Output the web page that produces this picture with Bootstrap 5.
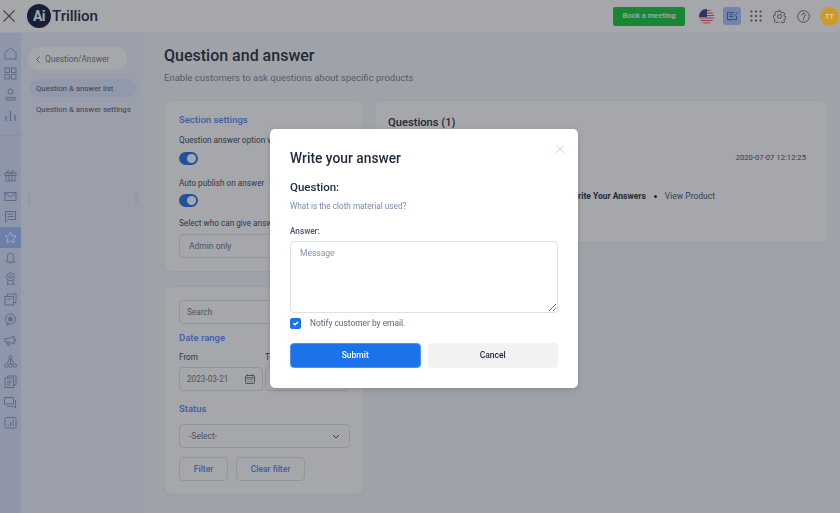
<!DOCTYPE html>
<html lang="en">
<head>
<meta charset="utf-8">
<title>Question and answer</title>
<link href="https://cdn.jsdelivr.net/npm/bootstrap@5.3.0/dist/css/bootstrap.min.css" rel="stylesheet">
<style>
html,body{height:513px;overflow:hidden}
body{font-family:Roboto,"Liberation Sans",sans-serif;background:#f5f7fb;color:#1e2a3a;font-size:9px}
.shell{width:840px;height:513px;display:flex;flex-direction:column}
.topbar{height:33px;flex:none;background:#fff;border-bottom:1px solid #eef1f8;padding:0 1px 0 3px}
.brand-x{width:12px;height:12px;margin-right:12px}
.logo-word{font-size:15.2px;font-weight:500;letter-spacing:-.1px;color:#1a2540;margin-left:1px}
.logo-ball{width:24px;height:24px;border-radius:50%;background:#0b1b3d;color:#fff;font-size:14px;font-weight:700;line-height:24px;text-align:center;letter-spacing:-.5px}
.book-btn{background:#0fc935;border:0;color:#fff;font-size:7.6px;font-weight:500;width:72px;height:19px;padding:0;border-radius:2px;margin-right:14px}
.flag{width:15px;height:15px;border-radius:50%;margin-right:9px;overflow:hidden;display:block}
.news-tile{width:18px;height:18px;background:#a9c4ff;border-radius:3px;margin-right:9px}
.top-ic{display:block;margin-right:11px}
.ic-grid{width:12px;height:12px}
.ic-round{width:13px;height:13px}
.avatar{width:19px;height:19px;border-radius:50%;background:#cc9a2a;color:#e9e4d2;font-size:7.500px;line-height:19px;text-align:center;margin-left:-1px;position:relative;z-index:1055}
.body-row{flex:1;min-height:0}
.rail{width:21px;flex:none;background:#d8e3fb;padding-top:10px}
.rail-ic{height:20.6px;display:flex;align-items:center;justify-content:center}
.rail-ic svg{width:13px;height:13px;display:block}
.rail-sep{height:1px;background:#cfd6e6;margin:10px 0 29px}
.rail-on{background:#9dbcff}
.subnav{width:122px;flex:none;background:#ebf1ff;padding:14px 6px 0 7px;position:relative}
.back-pill{height:23px;width:99px;background:#fff;border-radius:12px;font-size:8.300px;color:#66738a;padding:1px 0 0 8px;gap:5px}
.sub-item{height:18px;border-radius:9px;padding:1px 0 0 6px;font-size:7.800px;color:#4b5567;display:flex;align-items:center;width:107px;margin-left:2px}
.sub-on{background:#dce8ff;margin-top:9px;margin-bottom:3px}
.grip{position:absolute;top:160px;width:3px;height:12px;background:#dfe8fb;border-radius:2px}
.main-col{flex:1;min-width:0;padding:12px 12px 0 21px}
.page-h{font-size:16px;font-weight:500;color:#1e2a3a;margin:0 0 5px;line-height:22px}
.page-sub{font-size:9.500px;color:#74808f;margin:0 0 16px;line-height:12px}
.cols{gap:10px;align-items:flex-start}
.left-col{width:200px;flex:none}
.panel{background:#fff;border:1px solid #eceef2;border-radius:7px;padding:13px 13px 13px 14px}
.panel-a{height:172px;margin-bottom:14px}
.panel-b{height:209px}
.panel-r{flex:1;height:143px;position:relative;padding-left:13px}
.sec-h{color:#5283f5;font-size:9.500px;font-weight:500;line-height:12px}
.fld-l{font-size:8.200px;color:#374150;line-height:11px}
.sw-on{width:19px;height:13px;border-radius:7px;background:#1d6fec;position:relative;display:block}
.sw-on::after{content:"";position:absolute;right:2px;top:2px;width:9px;height:9px;border-radius:50%;background:#fff}
.fake-in{height:24px;border:1px solid #dfe1e6;border-radius:4px;font-size:8.500px;color:#68717f;display:flex;align-items:center;padding-left:9px;background:#fff;position:relative}
.in-tight{padding-left:7px;font-size:8.200px}
.r-head{font-size:11.200px;font-weight:500;color:#1e2a3a;line-height:14px;margin-top:2px}
.r-date{position:absolute;right:21px;top:51px;font-size:7.700px;color:#3f4754;line-height:11px}
.r-links{position:absolute;right:112px;top:90px;font-size:8.500px;color:#46505e;line-height:11px;gap:8px}
.r-links b{color:#1e2a3a;font-weight:700}
.ghost-btn{height:24px;border:1px solid #dfe1e6;border-radius:4px;background:#fff;color:#5283f5;font-size:8.500px;font-weight:500;padding:0}
.scrim{position:fixed;inset:0;background:rgba(38,41,52,.41);z-index:1050}
.dlg{position:fixed;left:270px;top:129px;width:308px;height:259px;background:#fff;border-radius:5px;padding:20px;z-index:1060;box-shadow:0 2px 6px rgba(0,0,0,.15)}
.dlg-x{position:absolute;right:13px;top:15px;width:10px;height:10px;display:block}
.dlg-h{font-size:13.800px;font-weight:500;color:#1e2a3a;line-height:18px;margin:0 0 13px}
.dlg-q{font-size:11.500px;font-weight:500;color:#1e2a3a;line-height:14px;margin:0 0 7px}
.dlg-sub{font-size:8.200px;color:#7a8aa5;line-height:11px;margin:0 0 14px}
.dlg-lab{font-size:8.200px;font-weight:500;color:#4a5566;line-height:11px;margin:0 0 4px}
.dlg-ta.form-control{display:block;height:72px;width:268px;font-size:8.500px;border:1px solid #dfe1e6;border-radius:4px;padding:6px 9px;line-height:11px;color:#7a8aa5;box-shadow:none}
.dlg-ta::placeholder{color:#8492a8;opacity:1}
.dlg-check{margin:4px 0 14px;gap:9px;height:12px}
.dlg-check .form-check-input{width:11px;height:11px;margin:0;border-radius:2px;background-color:#1a73ea;border-color:#1a73ea;flex:none}
.dlg-check label{font-size:8.400px;color:#5d6676;line-height:12px}
.dlg-acts{gap:7px}
.dlg-btn{flex:1;height:25px;font-size:8.500px;font-weight:500;padding:0;border-radius:4px}
.btn-sub{background:#1a73ea;border:1px solid #4d92ef;color:#fff}
.btn-can{background:#f2f2f3;border:1px solid #f2f2f3;color:#1e2a3a}
</style>
</head>
<body>
<div class="shell">
  <header class="topbar d-flex align-items-center">
    <svg class="brand-x" viewBox="0 0 14 14" fill="none" stroke="#3c4048" stroke-width="1.200"><path d="M.5.5l13 13M13.500.5l-13 13"/></svg>
    <div class="logo-ball">Ai</div>
    <span class="logo-word">Trillion</span>
    <div class="ms-auto d-flex align-items-center">
      <button type="button" class="btn book-btn">Book a meeting</button>
      <svg class="flag" viewBox="0 0 15 15"><rect width="15" height="15" fill="#fff"/><path d="M0 1.500h15M0 4h15M0 6.500h15M0 9h15M0 11.500h15M0 14h15" stroke="#e0434e" stroke-width="1.200"/><rect width="8" height="8" fill="#2f3f7e"/></svg>
      <div class="news-tile d-flex align-items-center justify-content-center"><svg width="13" height="13" viewBox="0 0 13 13" fill="none" stroke="#3d5fa8" stroke-width=".9"><path d="M10.500 6v3.500h-5L4 11V9.500H1.500V2.500H8"/><path d="M3.500 4.500H7M3.500 6.500H7"/><path d="M8.500 6l3-3.500"/></svg></div>
      <svg class="top-ic ic-grid" viewBox="0 0 12 12" fill="#4a4f58"><circle cx="1.500" cy="1.500" r="1.100"/><circle cx="6" cy="1.500" r="1.100"/><circle cx="10.500" cy="1.500" r="1.100"/><circle cx="1.500" cy="6" r="1.100"/><circle cx="6" cy="6" r="1.100"/><circle cx="10.500" cy="6" r="1.100"/><circle cx="1.500" cy="10.500" r="1.100"/><circle cx="6" cy="10.500" r="1.100"/><circle cx="10.500" cy="10.500" r="1.100"/></svg>
      <svg class="top-ic ic-round" viewBox="0 0 15 15" fill="none" stroke="#4a4f58" stroke-width="1"><circle cx="7.500" cy="7.500" r="2.300"/><path d="M6.300 1h2.400l.4 1.900 1.300.6 1.700-1 1.600 1.800-1.100 1.600.5 1.300 1.900.5v2.400l-1.900.4-.6 1.300 1 1.600-1.700 1.500-1.600-1-1.300.5-.5 1.600H6.300l-.4-1.700-1.300-.5-1.600 1-1.700-1.600 1-1.600-.5-1.300L.5 8.700V6.300l1.800-.4.600-1.300-1-1.600 1.700-1.700 1.600 1 1.300-.5z"/></svg>
      <svg class="top-ic ic-round" viewBox="0 0 15 15" fill="none" stroke="#4a4f58" stroke-width="1"><circle cx="7.500" cy="7.500" r="6.700"/><path d="M5.500 5.800c0-2.600 4.100-2.600 4.100 0 0 1.700-2 1.600-2 3.500" stroke-linecap="round"/><circle cx="7.600" cy="11" r=".4" fill="#4a4f58"/></svg>
      <div class="avatar">TT</div>
    </div>
  </header>
  <div class="body-row d-flex">
    <aside class="rail">
      <div class="rail-ic"><svg viewBox="0 0 13 13" fill="none" stroke="#7f97c9" stroke-width="1"><path d="M1 5.500L6.500 1 12 5.500V12H1z"/></svg></div>
      <div class="rail-ic"><svg viewBox="0 0 13 13" fill="none" stroke="#7f97c9" stroke-width="1"><rect x="1" y="1" width="4.500" height="4.500"/><rect x="7.500" y="1" width="4.500" height="4.500"/><rect x="1" y="7.500" width="4.500" height="4.500"/><rect x="7.500" y="7.500" width="4.500" height="4.500"/></svg></div>
      <div class="rail-ic"><svg viewBox="0 0 13 13" fill="none" stroke="#7f97c9" stroke-width="1"><circle cx="6.500" cy="3.500" r="2.500"/><path d="M2 12V9.500h9V12z"/></svg></div>
      <div class="rail-ic"><svg viewBox="0 0 13 13" fill="none" stroke="#7f97c9" stroke-width="1.300"><path d="M2 12V7M6.500 12V2M11 12V6"/></svg></div>
      <div class="rail-sep"></div>
      <div class="rail-ic"><svg viewBox="0 0 13 13" fill="none" stroke="#7f97c9" stroke-width="1"><path d="M1 4h11v2.500H1zM2 6.500V12h9V6.500M5 4v8M8 4v8M4 4C2 2 4 0 6.500 4 9 0 11 2 9 4"/></svg></div>
      <div class="rail-ic"><svg viewBox="0 0 13 13" fill="none" stroke="#7f97c9" stroke-width="1"><rect x="1" y="2.500" width="11" height="8"/><path d="M1 3l5.500 4L12 3"/></svg></div>
      <div class="rail-ic"><svg viewBox="0 0 13 13" fill="none" stroke="#7f97c9" stroke-width="1"><path d="M1.500 1.500h10v8H4.500l-3 2.500zM3.500 4h6M3.500 6.500h6"/></svg></div>
      <div class="rail-ic rail-on"><svg viewBox="0 0 13 13" fill="none" stroke="#fff" stroke-width="1"><path d="M6.500 1l1.700 3.600 3.800.5-2.800 2.700.7 3.900-3.400-1.900-3.400 1.900.7-3.900L1 5.100l3.800-.5z"/></svg></div>
      <div class="rail-ic"><svg viewBox="0 0 13 13" fill="none" stroke="#7f97c9" stroke-width="1"><path d="M6.500 1C4 1 3.500 3 3.500 5.500c0 2.500-.5 3.500-1.500 4.500h9c-1-1-1.500-2-1.500-4.500C9.500 3 9 1 6.500 1zM5.500 11.800h2"/></svg></div>
      <div class="rail-ic"><svg viewBox="0 0 13 13" fill="none" stroke="#7f97c9" stroke-width="1"><circle cx="6.500" cy="4.800" r="4"/><circle cx="6.500" cy="4.800" r="1.500"/><path d="M4 8.500l-1 4 2-.8 1.500 1 1.500-1 2 .8-1-4"/></svg></div>
      <div class="rail-ic"><svg viewBox="0 0 13 13" fill="none" stroke="#7f97c9" stroke-width="1"><rect x="1" y="3.500" width="8.500" height="8.500"/><path d="M3.500 3.500V1H12v8.500H9.500M3 6h4"/></svg></div>
      <div class="rail-ic"><svg viewBox="0 0 13 13" fill="none" stroke="#7f97c9" stroke-width="1"><circle cx="6.500" cy="6" r="5"/><path d="M3 10l-.5 2.500L5.500 11"/><path d="M6.500 3.500l.8 1.600 1.700.2-1.200 1.200.3 1.700-1.600-.8-1.600.8.300-1.700L4 5.300l1.700-.2z" fill="#7f97c9"/></svg></div>
      <div class="rail-ic"><svg viewBox="0 0 13 13" fill="none" stroke="#7f97c9" stroke-width="1"><path d="M1 4.500h4L10 2v8L5 8H1zM10 4c2 0 2 4 0 4M3 8l1 3.500h1.500L5 8"/></svg></div>
      <div class="rail-ic"><svg viewBox="0 0 13 13" fill="none" stroke="#7f97c9" stroke-width="1"><circle cx="6.500" cy="2.300" r="1.500"/><circle cx="2.300" cy="10.500" r="1.800"/><circle cx="6.500" cy="10.500" r="1.800"/><circle cx="10.700" cy="10.500" r="1.800"/><path d="M6.500 4v4.700M5.800 4L2.800 8.800M7.200 4l3 4.800"/></svg></div>
      <div class="rail-ic"><svg viewBox="0 0 13 13" fill="none" stroke="#7f97c9" stroke-width="1"><rect x="1" y="3" width="8.500" height="9.500"/><path d="M3.500 3V1H12v9H9.500M3 6h4.500M3 8h4.500M3 10h3"/></svg></div>
      <div class="rail-ic"><svg viewBox="0 0 13 13" fill="none" stroke="#7f97c9" stroke-width="1"><path d="M.5 1.500h9v6.500h-9zM11.500 4v8l-2-1.500H3V10"/></svg></div>
      <div class="rail-ic"><svg viewBox="0 0 13 13" fill="none" stroke="#7f97c9" stroke-width="1"><rect x="1" y="1.500" width="11" height="10.500" rx="1"/><path d="M4 10V8.500M6.500 10V6M9 10V3.500"/></svg></div>
    </aside>
    <nav class="subnav">
      <div class="back-pill d-flex align-items-center"><svg width="4" height="7" viewBox="0 0 4 7" fill="none" stroke="#66738a" stroke-width="1"><path d="M3.500.5l-3 3 3 3"/></svg><span>Question/Answer</span></div>
      <div class="sub-item sub-on">Question &amp; answer list</div>
      <div class="sub-item">Question &amp; answer settings</div>
      <span class="grip" style="left:7px"></span><span class="grip" style="left:114px"></span>
    </nav>
    <main class="main-col">
      <h1 class="page-h">Question and answer</h1>
      <p class="page-sub">Enable customers to ask questions about specific products</p>
      <div class="d-flex cols">
        <div class="left-col">
          <section class="panel panel-a">
            <div class="sec-h" style="margin-bottom:9px">Section settings</div>
            <div class="fld-l text-nowrap overflow-hidden" style="margin-bottom:6px">Question answer option visible</div>
            <span class="sw-on" style="margin-bottom:13px"></span>
            <div class="fld-l text-nowrap" style="margin-bottom:5px">Auto publish on answer</div>
            <span class="sw-on" style="margin-bottom:11px"></span>
            <div class="fld-l text-nowrap overflow-hidden" style="margin-bottom:5px">Select who can give answers</div>
            <div class="fake-in">Admin only</div>
          </section>
          <section class="panel panel-b">
            <div class="fake-in in-tight" style="margin-bottom:8px">Search</div>
            <div class="sec-h" style="margin-bottom:8px">Date range</div>
            <div class="d-flex" style="gap:2px">
              <div style="width:84px">
                <div class="fld-l" style="margin-bottom:4px">From</div>
                <div class="fake-in in-tight">2023-03-21
                  <svg class="ms-auto" style="margin-right:7px" width="10" height="10" viewBox="0 0 10 10" fill="none" stroke="#555d6a" stroke-width=".9"><rect x=".5" y="1.500" width="9" height="8" rx="1"/><path d="M.5 3.800h9M2.500.3v2M7.500.3v2M2.500 5.500h1M4.500 5.500h1M6.500 5.500h1M2.500 7.500h1M4.500 7.500h1M6.500 7.500h1"/></svg>
                </div>
              </div>
              <div style="width:84px">
                <div class="fld-l" style="margin-bottom:4px">To</div>
                <div class="fake-in"></div>
              </div>
            </div>
            <div class="sec-h" style="margin:12px 0 9px">Status</div>
            <div class="fake-in" style="margin-bottom:9px">-Select-
              <svg class="ms-auto" style="margin-right:9px" width="8" height="5" viewBox="0 0 8 5" fill="none" stroke="#4a4f58" stroke-width="1"><path d="M1 1l3 3 3-3"/></svg>
            </div>
            <div class="d-flex" style="gap:8px">
              <button type="button" class="btn ghost-btn" style="width:49px">Filter</button>
              <button type="button" class="btn ghost-btn" style="width:69px">Clear filter</button>
            </div>
          </section>
        </div>
        <section class="panel panel-r">
          <div class="r-head">Questions (1)</div>
          <div class="r-date">2020-07-07 12:12:25</div>
          <div class="r-links d-flex align-items-center"><b>Write Your Answers</b><span style="width:3px;height:3px;border-radius:50%;background:#1e2a3a"></span><span>View Product</span></div>
        </section>
      </div>
    </main>
  </div>
</div>
<div class="scrim"></div>
<div class="dlg">
  <svg class="dlg-x" viewBox="0 0 11 11" fill="none" stroke="#c3d1ee" stroke-width="1"><path d="M1 1l9 9M10 1l-9 9"/></svg>
  <h2 class="dlg-h">Write your answer</h2>
  <h3 class="dlg-q">Question:</h3>
  <p class="dlg-sub">What is the cloth material used?</p>
  <p class="dlg-lab">Answer:</p>
  <textarea class="form-control dlg-ta" placeholder="Message"></textarea>
  <div class="d-flex align-items-center dlg-check">
    <input class="form-check-input" type="checkbox" id="notify" checked>
    <label for="notify">Notify customer by email.</label>
  </div>
  <div class="d-flex dlg-acts">
    <button type="button" class="btn dlg-btn btn-sub">Submit</button>
    <button type="button" class="btn dlg-btn btn-can">Cancel</button>
  </div>
</div>
<script src="https://cdn.jsdelivr.net/npm/bootstrap@5.3.0/dist/js/bootstrap.bundle.min.js"></script>
</body>
</html>
